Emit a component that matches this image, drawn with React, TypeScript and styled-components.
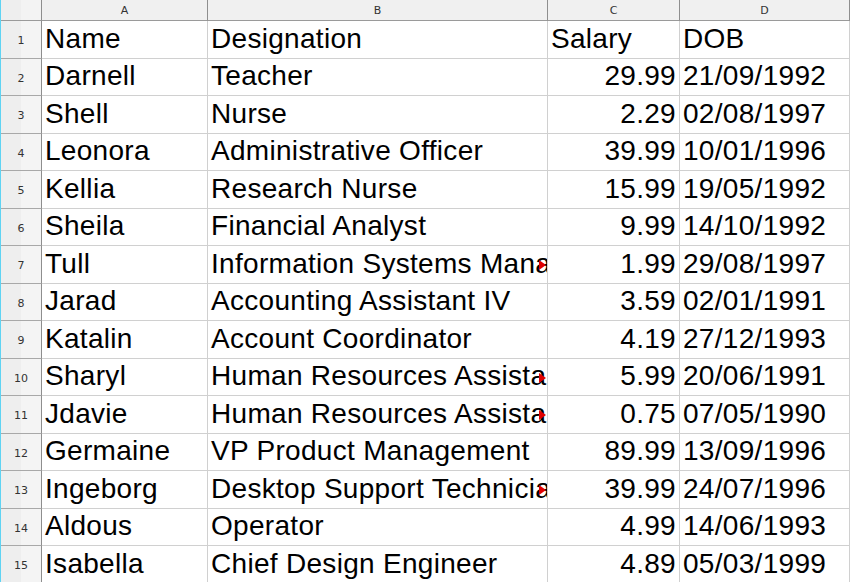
import React from "react";
import styled, { createGlobalStyle } from "styled-components";

const GlobalStyle = createGlobalStyle`
  html, body {
    margin: 0;
    padding: 0;
    background: #ffffff;
    overflow: hidden;
  }
  body {
    font-family: "Liberation Sans", Arial, sans-serif;
  }
`;

const Sheet = styled.div`
  display: grid;
  grid-template-columns: 41px 166px 340px 132px 1fr;
  grid-template-rows: 21px;
  grid-auto-rows: 37.5px;
  width: 850px;
  height: 582px;
  overflow: hidden;
  border-left: 1px solid #5fd3f3;
  box-sizing: border-box;
  background: #ffffff;
`;

const Corner = styled.div`
  box-sizing: border-box;
  background: linear-gradient(to right, #eeeeee 0, #eeeeee 50%, #f3f3f3 50%, #f3f3f3 100%);
  border-right: 1px solid #8e8e8e;
  border-bottom: 1px solid #9a9a9a;
`;

const ColHeader = styled.div`
  box-sizing: border-box;
  display: flex;
  align-items: center;
  justify-content: center;
  background: #f0f0f0;
  border-right: 1px solid #8e8e8e;
  border-bottom: 1px solid #9a9a9a;
  font-family: "DejaVu Sans", "Liberation Sans", sans-serif;
  font-size: 11px;
  color: #333333;
  padding-top: 1px;
`;

const RowHeader = styled.div`
  box-sizing: border-box;
  display: flex;
  align-items: center;
  justify-content: center;
  background: linear-gradient(to right, #eeeeee 0, #eeeeee 50%, #f4f4f4 50%, #f4f4f4 100%);
  border-right: 1px solid #8e8e8e;
  border-bottom: 1px solid #a8a8a8;
  font-family: "DejaVu Sans", "Liberation Sans", sans-serif;
  font-size: 11px;
  color: #333333;
  padding-top: 3px;
`;

const Cell = styled.div<{ $align?: "left" | "right" }>`
  position: relative;
  box-sizing: border-box;
  display: flex;
  align-items: center;
  justify-content: ${(p) => (p.$align === "right" ? "flex-end" : "flex-start")};
  padding: 0 ${(p) => (p.$align === "right" ? "3px" : "0")} 1px
    ${(p) => (p.$align === "right" ? "0" : "3px")};
  border-right: 1px solid #d0d0d0;
  border-bottom: 1px solid #d0d0d0;
  font-family: "Liberation Sans", Arial, sans-serif;
  font-size: 28px;
  letter-spacing: 0.3px;
  color: #000000;
  white-space: nowrap;
  overflow: hidden;
`;

const OverflowMark = styled.span`
  position: absolute;
  right: 1px;
  top: 50%;
  margin-top: -4px;
  width: 0;
  height: 0;
  border-top: 5px solid transparent;
  border-bottom: 5px solid transparent;
  border-left: 7px solid #e00000;
`;

type Row = [string, string, string, string];

const rows: Row[] = [
  ["Name", "Designation", "Salary", "DOB"],
  ["Darnell", "Teacher", "29.99", "21/09/1992"],
  ["Shell", "Nurse", "2.29", "02/08/1997"],
  ["Leonora", "Administrative Officer", "39.99", "10/01/1996"],
  ["Kellia", "Research Nurse", "15.99", "19/05/1992"],
  ["Sheila", "Financial Analyst", "9.99", "14/10/1992"],
  ["Tull", "Information Systems Manager", "1.99", "29/08/1997"],
  ["Jarad", "Accounting Assistant IV", "3.59", "02/01/1991"],
  ["Katalin", "Account Coordinator", "4.19", "27/12/1993"],
  ["Sharyl", "Human Resources Assistant I", "5.99", "20/06/1991"],
  ["Jdavie", "Human Resources Assistant II", "0.75", "07/05/1990"],
  ["Germaine", "VP Product Management", "89.99", "13/09/1996"],
  ["Ingeborg", "Desktop Support Technician", "39.99", "24/07/1996"],
  ["Aldous", "Operator", "4.99", "14/06/1993"],
  ["Isabella", "Chief Design Engineer", "4.89", "05/03/1999"],
];

const overflowing = new Set([7, 10, 11, 13]);

export default function App() {
  return (
    <>
      <GlobalStyle />
      <Sheet>
        <Corner />
        <ColHeader>A</ColHeader>
        <ColHeader>B</ColHeader>
        <ColHeader>C</ColHeader>
        <ColHeader>D</ColHeader>
        {rows.map((r, i) => {
          const n = i + 1;
          return (
            <React.Fragment key={n}>
              <RowHeader>{n}</RowHeader>
              <Cell>{r[0]}</Cell>
              <Cell>
                {r[1]}
                {overflowing.has(n) && <OverflowMark />}
              </Cell>
              <Cell $align={n === 1 ? "left" : "right"}>{r[2]}</Cell>
              <Cell>{r[3]}</Cell>
            </React.Fragment>
          );
        })}
      </Sheet>
    </>
  );
}
